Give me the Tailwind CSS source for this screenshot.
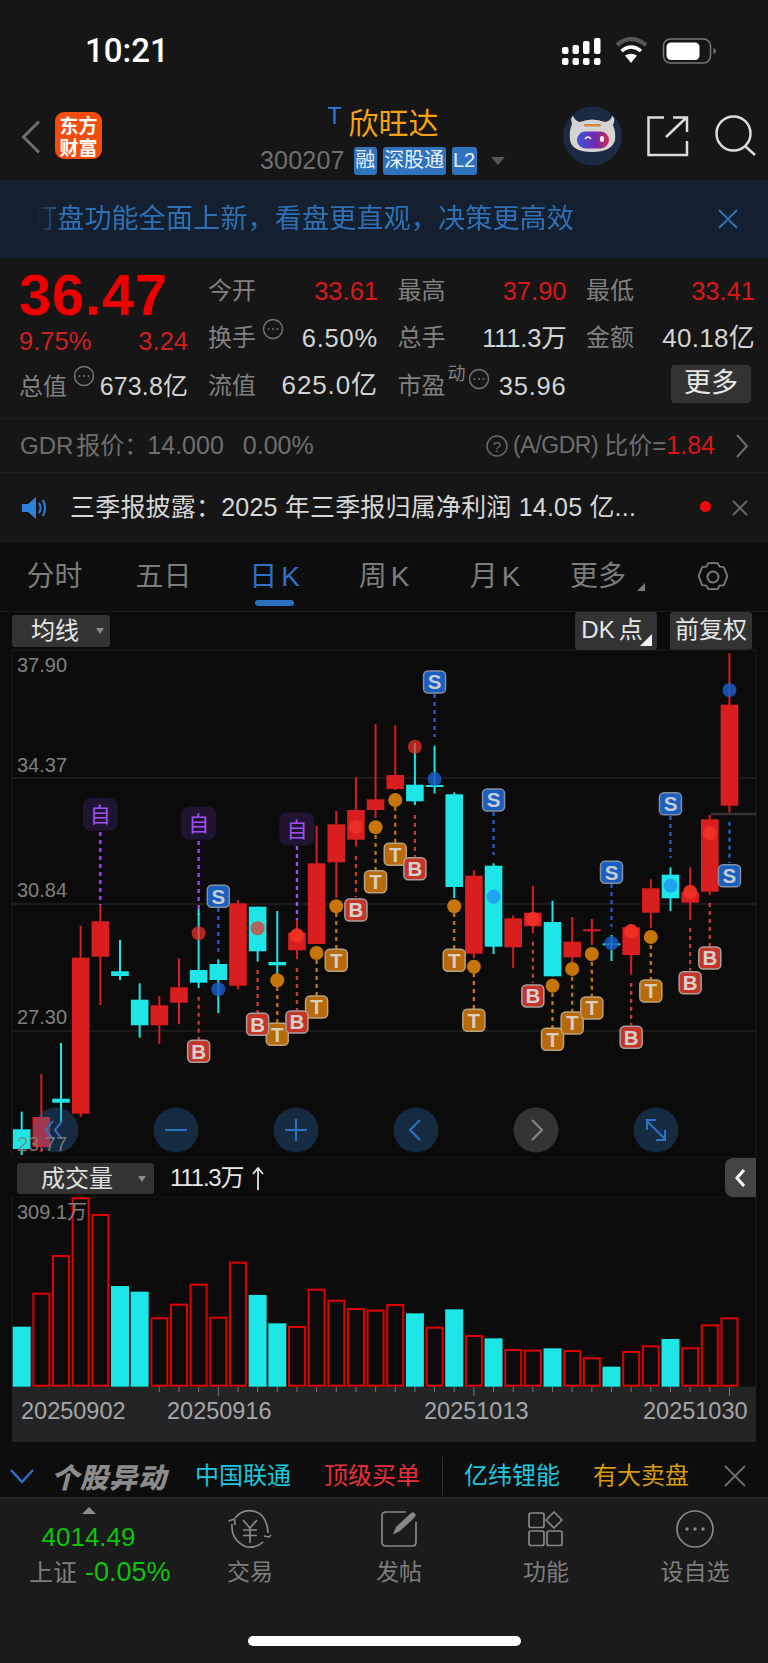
<!DOCTYPE html>
<html lang="zh">
<head>
<meta charset="UTF-8">
<title>欣旺达 日K</title>
<script src="https://cdn.jsdelivr.net/npm/@tailwindcss/browser@4"></script>
</head>
<body class="bg-[#161616] font-['Liberation_Sans','Noto_Sans_CJK_SC',sans-serif]">
<div class="w-[768px] h-[1663px] flex flex-col overflow-hidden text-[#808080]">

  <!-- status bar -->
  <div class="h-[100px] flex items-start justify-between">
    <span class="ml-[85px] mt-[32px] text-[33px] leading-[38px] font-medium text-white font-['Roboto',sans-serif]">10:21</span>
    <svg class="mt-[32px]" width="230" height="40" viewBox="538 32 230 40">
      <g fill="#fff">
        <rect x="562" y="58" width="6.5" height="7" rx="2"/><rect x="572.5" y="58" width="6.5" height="7" rx="2"/><rect x="583" y="58" width="6.5" height="7" rx="2"/><rect x="594" y="58" width="6.5" height="7" rx="2"/>
        <rect x="562" y="47" width="6.5" height="7" rx="2"/><rect x="572.5" y="45" width="6.5" height="9" rx="2"/><rect x="583" y="41" width="6.5" height="13" rx="2"/><rect x="594" y="38" width="6.5" height="16" rx="2"/>
      </g>
      <path d="M617 45 Q631 33 646 45" fill="none" stroke="#555" stroke-width="4.5"/>
      <path d="M621.500 51 Q631 43 641 51" fill="none" stroke="#fff" stroke-width="3.500"/>
      <path d="M625 55.500 Q631 52 637 55.500 L631 63 Z" fill="#fff"/>
      <rect x="663.500" y="39" width="47" height="24" rx="7" fill="none" stroke="#777" stroke-width="1.500"/>
      <rect x="666.500" y="42.500" width="33" height="17.500" rx="4.500" fill="#fff"/>
      <path d="M713.500 47.500 Q716 50 716 51 Q716 52 713.500 54.500 Z" fill="#777"/>
    </svg>
  </div>

  <!-- title bar -->
  <div class="h-[80px] flex items-start relative">
    <svg class="ml-[21px] mt-[20px]" width="20" height="34" viewBox="0 0 20 34"><path d="M18 1.500 L2.500 17 L18 32.500" fill="none" stroke="#6e6e6e" stroke-width="3"/></svg>
    <div class="ml-[14px] mt-[12px] w-[47px] h-[47px] rounded-[9px] bg-[#f34c0c] flex items-center justify-center text-white text-[19px] leading-[22px] font-bold text-center font-['Noto_Sans_CJK_SC',sans-serif]">东方<br>财富</div>
    <div class="absolute left-[245px] top-[2px] w-[280px] h-[76px]">
      <div class="flex justify-center pr-[4px]">
        <span class="text-[#2f78dc] text-[23px] leading-[26px] mt-[1px] mr-[7px]">T</span>
        <span class="text-[#f5a20e] text-[30px] leading-[44px] mt-[0px]">欣旺达</span>
      </div>
      <div class="flex items-center mt-[1px] ml-[15px] h-[28px]">
        <span class="text-[25px] tracking-[0.2px] text-[#6f6f6f] mr-[9px]">300207</span>
        <span class="h-[28px] w-[23px] rounded-[3px] bg-[#2f72bd] text-[#e6eef8] text-[20px] leading-[27px] text-center">融</span>
        <span class="h-[28px] w-[63px] ml-[6px] rounded-[3px] bg-[#2f72bd] text-[#e6eef8] text-[20px] leading-[27px] text-center">深股通</span>
        <span class="h-[28px] w-[25px] ml-[6px] rounded-[3px] bg-[#2f72bd] text-[#e6eef8] text-[20px] leading-[27px] text-center">L2</span>
        <span class="ml-[14px] w-0 h-0 border-x-[7px] border-x-transparent border-t-[8px] border-t-[#565656]"></span>
      </div>
    </div>
    <svg class="ml-[461px] mt-[6px]" width="60" height="60" viewBox="563 106 60 60">
      <defs>
        <linearGradient id="visor" x1="0" x2="1" y1="0" y2="0"><stop offset="0" stop-color="#3f55d8"/><stop offset=".55" stop-color="#6a2bb0"/><stop offset="1" stop-color="#d0285a"/></linearGradient>
      </defs>
      <circle cx="592.700" cy="136" r="29.500" fill="#1d2a44"/>
      <path d="M572 124 Q570 117 573 116 Q575 121 580 122 Q592 117 605 122 Q611 121 612 116 Q616 118 613 125 Q616 132 615 140 Q612 152 592 152 Q572 152 570 140 Q569 131 572 124 Z" fill="#d6d4d2"/>
      <rect x="584" y="124" width="17" height="2.500" rx="1" fill="#c98a4a"/>
      <rect x="577" y="131.500" width="32" height="17" rx="8.500" fill="url(#visor)"/>
      <path d="M585 139 Q588 135 591 139" fill="none" stroke="#f5eefc" stroke-width="1.500"/>
      <rect x="600" y="136" width="4" height="6" rx="2" fill="#f6e9ee"/>
    </svg>
    <svg class="ml-[23px] mt-[14px]" width="44" height="44" viewBox="646 114 44 44">
      <path d="M664 117.500 H648.500 V155 H687 V141 M666 137 L686 118 M673 117.500 H687 V132" fill="none" stroke="#dcdcdc" stroke-width="2.500"/>
    </svg>
    <svg class="ml-[24px] mt-[13px]" width="44" height="44" viewBox="714 113 44 44">
      <circle cx="733.500" cy="133.500" r="17" fill="none" stroke="#dcdcdc" stroke-width="2.500"/>
      <path d="M745 146 L755 155" stroke="#dcdcdc" stroke-width="2.500"/>
    </svg>
  </div>

  <!-- promo banner -->
  <div class="h-[78px] bg-[#14202f] border-t border-[#222] flex items-center relative">
    <div class="ml-[30px] text-[27px] tracking-[0.2px] leading-[40px] text-[#2f70b5] mb-[2px] [mask-image:linear-gradient(to_right,transparent_6px,black_34px)]">盯盘功能全面上新，看盘更直观，决策更高效</div>
    <svg class="absolute left-[717px] top-[27px]" width="22" height="22" viewBox="0 0 22 22"><path d="M2 2 L20 20 M20 2 L2 20" stroke="#2f70b5" stroke-width="2"/></svg>
  </div>

  <!-- quote block -->
  <div class="h-[160px] pt-[9px] flex pl-[19px] pr-[13px]">
    <div class="w-[169px] shrink-0">
      <div class="h-[51px] text-[#ee0000] text-[58px] leading-[56px] font-bold tracking-[0.8px]">36.47</div>
      <div class="flex justify-between text-[#cf2020] text-[25.5px] leading-[46px] h-[44px]"><span>9.75%</span><span>3.24</span></div>
      <div class="flex items-center h-[48px] mt-[1px] relative">
        <span class="text-[24px]">总值</span>
        <svg class="absolute left-[54px] top-[2px]" width="22" height="22" viewBox="0 0 22 22"><use href="#more-dot"/></svg>
        <span class="ml-auto text-[25px] tracking-[0.1px] text-[#d4d4d4]">673.8亿</span>
      </div>
    </div>
    <div class="ml-[20px] grow grid grid-cols-[170px_169px_169px] gap-x-[19.5px] grid-rows-[47.5px_47.5px_47.5px] items-center text-[24px]">
      <div class="flex justify-between items-center"><span>今开</span><span class="text-[25.5px] text-[#d81818]">33.61</span></div>
      <div class="flex justify-between items-center"><span>最高</span><span class="text-[25.5px] text-[#d81818]">37.90</span></div>
      <div class="flex justify-between items-center"><span>最低</span><span class="text-[25.5px] text-[#d81818]">33.41</span></div>
      <div class="flex justify-between items-center relative"><span>换手</span>
        <svg class="absolute left-[54px] top-[-1px]" width="22" height="22" viewBox="0 0 22 22"><use href="#more-dot"/></svg>
        <span class="text-[25.5px] tracking-[0.8px] text-[#d4d4d4]">6.50%</span></div>
      <div class="flex justify-between items-center"><span>总手</span><span class="text-[25.5px] text-[#d4d4d4] tracking-[-0.2px]">111.3万</span></div>
      <div class="flex justify-between items-center"><span>金额</span><span class="text-[26px] text-[#d4d4d4] tracking-[0.3px]">40.18亿</span></div>
      <div class="flex justify-between items-center"><span>流值</span><span class="text-[26px] text-[#d4d4d4] tracking-[0.9px]">625.0亿</span></div>
      <div class="flex justify-between items-center relative"><span>市盈</span>
        <span class="absolute left-[50px] top-[-2px] text-[18px] leading-[18px]">动</span>
        <svg class="absolute left-[70px] top-[1px]" width="22" height="22" viewBox="0 0 22 22"><use href="#more-dot"/></svg>
        <span class="text-[25.5px] tracking-[0.8px] text-[#d4d4d4]">35.96</span></div>
      <div class="flex justify-end mb-[4px]"><span class="w-[80px] h-[38px] mr-[4px] rounded-[4px] bg-[#333333] text-[#e8e8e8] text-[27px] leading-[36px] text-center">更多</span></div>
    </div>
  </div>

  <!-- GDR row -->
  <div class="h-[55px] border-y border-[#1f1f1f] pl-[20px] pr-[19px] flex items-center text-[#6e6e6e]">
    <span class="text-[24px]">GDR<span class="ml-[3px]">报价：</span></span>
    <span class="ml-[-1px] text-[25px]">14.000</span>
    <span class="ml-[19px] text-[25px]">0.00%</span>
    <svg class="ml-auto mr-[5px]" width="22" height="24" viewBox="0 0 22 24"><circle cx="11" cy="12" r="10" fill="none" stroke="#6a6a6a" stroke-width="1.500"/><text x="11" y="17.500" text-anchor="middle" font-size="15" fill="#6a6a6a">?</text></svg>
    <span class="text-[23px] tracking-[-0.4px]">(A/GDR)</span>
    <span class="ml-[6px] text-[24px]">比价=</span>
    <span class="text-[25px] text-[#d81818]">1.84</span>
    <svg class="ml-[20px]" width="14" height="26" viewBox="0 0 14 26"><path d="M2 2 L12 13 L2 24" fill="none" stroke="#6e6e6e" stroke-width="2"/></svg>
  </div>

  <!-- announcement row -->
  <div class="h-[70px] pl-[22px] flex items-center relative">
    <svg width="26" height="22" viewBox="0 0 26 22"><path d="M0 7 H6 L14 0 V22 L6 15 H0 Z" fill="#2f7fd8"/><path d="M17 6 Q20 11 17 16 M21 3 Q25 11 21 19" fill="none" stroke="#2f7fd8" stroke-width="2"/></svg>
    <span class="ml-[22px] text-[25px] tracking-[0.2px] text-[#d8d8d8]">三季报披露：2025 年三季报归属净利润 14.05 亿...</span>
    <span class="absolute left-[700px] top-[28px] w-[11px] h-[11px] rounded-full bg-[#ee0a0a]"></span>
    <svg class="absolute left-[732px] top-[27px]" width="16" height="16" viewBox="0 0 16 16"><path d="M1 1 L15 15 M15 1 L1 15" stroke="#6a6a6a" stroke-width="1.800"/></svg>
  </div>

  <!-- period tabs -->
  <div class="h-[69px] bg-[#0d0d0d] border-b border-[#1a1a1a] flex items-start text-[28px] text-[#7c7c7c] relative">
    <div class="w-[109px] text-center pt-[13px] leading-[42px]">分时</div>
    <div class="w-[109px] text-center pt-[13px] leading-[42px]">五日</div>
    <div class="w-[113px] text-center pt-[13px] leading-[42px] text-[#2f70c8]">日<span class="ml-[4px]">K</span></div>
    <div class="w-[106px] text-center pt-[13px] leading-[42px]">周<span class="ml-[4px]">K</span></div>
    <div class="w-[116px] text-center pt-[13px] leading-[42px]">月<span class="ml-[4px]">K</span></div>
    <div class="w-[100px] text-center pt-[13px] leading-[42px] pr-[10px]">更多</div>
    <span class="absolute left-[637px] top-[40px] w-0 h-0 border-l-[8px] border-l-transparent border-b-[8px] border-b-[#7c7c7c]"></span>
    <svg class="absolute left-[696px] top-[17px]" width="34" height="34" viewBox="0 0 34 34"><path d="M12 2.500 H22 L24.500 6.500 L29 7 L33 17 L29 27 L24.500 27.500 L22 31.500 H12 L9.500 27.500 L5 27 L1 17 L5 7 L9.500 6.500 Z" fill="none" stroke="#7c7c7c" stroke-width="2" stroke-linejoin="round" transform="translate(1.700 .850) scale(.9)"/><circle cx="17" cy="17" r="5.500" fill="none" stroke="#7c7c7c" stroke-width="2"/></svg>
    <span class="absolute left-[255px] top-[57px] w-[39px] h-[6px] rounded-full bg-[#2c6fc0]"></span>
  </div>

  <!-- chart toolbar -->
  <div class="h-[38px] bg-[#0b0b0b] pl-[12px] pr-[16px] flex items-start text-[24px] text-[#e6e6e6]">
    <div class="w-[98px] h-[32px] mt-[3px] rounded-[3px] bg-[#333333] flex items-center pl-[19px] leading-[30px]">均线<span class="ml-[17px] w-0 h-0 border-x-[4px] border-x-transparent border-t-[6px] border-t-[#8a8a8a]"></span></div>
    <div class="ml-auto w-[82px] h-[38px] rounded-[3px] bg-[#333333] leading-[36px] text-center pr-[8px] relative">DK<span class="ml-[4px]">点</span><span class="absolute right-[5px] bottom-[4px] w-0 h-0 border-l-[12px] border-l-transparent border-b-[12px] border-b-[#f0f0f0]"></span></div>
    <div class="ml-[13px] w-[82px] h-[38px] rounded-[3px] bg-[#333333] leading-[36px] text-center">前复权</div>
  </div>

  <!-- k-line chart -->
  <div class="h-[508px] bg-[#0b0b0b] px-[12px]">
    <svg id="kline" class="block overflow-visible" width="744" height="508" viewBox="12 650 744 508"></svg>
  </div>

  <!-- volume header -->
  <div class="h-[39px] bg-[#0b0b0b] pl-[17px] flex items-start relative text-[24px]">
    <div class="w-[137px] h-[31px] mt-[5px] rounded-[3px] bg-[#333333] flex items-center pl-[24px] text-[#e0e0e0] leading-[30px]">成交量<span class="ml-[25px] w-0 h-0 border-x-[4px] border-x-transparent border-t-[6px] border-t-[#8a8a8a]"></span></div>
    <span class="ml-[16px] mt-[2px] leading-[36px] tracking-[-1.2px] text-[#e6e6e6]">111.3万</span>
    <svg class="ml-[9px] mt-[9px]" width="12" height="24" viewBox="0 0 12 24"><path d="M6 1 V23 M1 7 L6 1 L11 7" fill="none" stroke="#e6e6e6" stroke-width="1.800"/></svg>
    <div class="absolute left-[725px] top-0 w-[31px] h-[39px] rounded-l-[8px] bg-[#444444] flex items-center justify-center">
      <svg width="13" height="20" viewBox="0 0 13 20"><path d="M10 2 L3 10 L10 18" fill="none" stroke="#fff" stroke-width="3"/></svg>
    </div>
  </div>

  <!-- volume chart -->
  <div class="h-[190px] bg-[#0b0b0b] px-[12px]">
    <svg id="volume" class="block overflow-visible" width="744" height="190" viewBox="12 1197 744 190"></svg>
  </div>

  <!-- date axis -->
  <div class="h-[55px] bg-[#0b0b0b] px-[12px]">
    <div class="h-[55px] bg-[#232426] relative text-[23.5px] text-[#a6a6a6] leading-[26px]">
      <svg id="ticks" class="absolute left-0 top-0" width="744" height="12" viewBox="12 1387 744 12"></svg>
      <span class="absolute left-[9px] top-[11px]">20250902</span>
      <span class="absolute left-[155px] top-[11px]">20250916</span>
      <span class="absolute left-[412px] top-[11px]">20251013</span>
      <span class="absolute left-[631px] top-[11px]">20251030</span>
    </div>
  </div>

  <!-- movers ticker -->
  <div class="h-[57px] pt-[12px] bg-[#0d0d0d] border-b-2 border-[#262626] flex items-center relative text-[24px]">
    <svg class="ml-[10px]" width="24" height="16" viewBox="0 0 24 16"><path d="M1 2 L12 14 L23 2" fill="none" stroke="#2f72c4" stroke-width="2.500"/></svg>
    <span class="ml-[17px] text-[28px] font-black italic text-[#8c8c8c] font-['Noto_Sans_CJK_SC',sans-serif] leading-[34px] w-[124px] tracking-[1px]">个股异动</span>
    <span class="ml-[20px] text-[#1bc8de]">中国联通</span>
    <span class="ml-[33px] text-[#e8303a]">顶级买单</span>
    <span class="ml-[22px] w-px h-[38px] bg-[#333]"></span>
    <span class="ml-[21px] text-[#1bc8de]">亿纬锂能</span>
    <span class="ml-[33px] text-[#d79b0c]">有大卖盘</span>
    <svg class="ml-[35px]" width="22" height="22" viewBox="0 0 22 22"><path d="M1 1 L21 21 M21 1 L1 21" stroke="#6e6e6e" stroke-width="1.800"/></svg>
  </div>

  <!-- bottom bar -->
  <div class="grow bg-[#1b1b1b] relative text-[23px] text-[#7e7e7e]">
    <div class="absolute left-0 top-0 w-[177px]">
      <span class="block mx-auto mt-[8px] w-0 h-0 border-x-[7px] border-x-transparent border-b-[7px] border-b-[#8a8a8a]"></span>
      <div class="text-[26px] leading-[30px] text-[#0bc40b] mt-[8px] text-center">4014.49</div>
      <div class="mt-[4px] pl-[29px] leading-[32px] text-[24px] whitespace-nowrap">上证<span class="ml-[8px] text-[27px] text-[#0bc40b]">-0.05%</span></div>
    </div>
    <div class="absolute left-[180px] top-0 w-[140px] flex flex-col items-center">
      <svg class="mt-[9px]" width="46" height="42" viewBox="228 1509 46 42" fill="none" stroke="#888" stroke-width="1.700">
        <path d="M236 1519 Q244 1509 256 1512.500 Q268 1516 269 1534 M233 1525 Q232 1542 248 1548 Q258 1549 264 1543"/>
        <path d="M229.500 1522 L235.500 1520 L236 1526 M265 1537 L270 1538 L272 1536" stroke-linejoin="round"/>
        <path d="M244 1521 L251 1529 L258 1521 M244 1531 H258 M244 1536.500 H258 M251 1529 V1544"/>
      </svg>
      <span class="mt-[6px] leading-[32px]">交易</span>
    </div>
    <div class="absolute left-[329px] top-0 w-[140px] flex flex-col items-center">
      <svg class="mt-[9px]" width="42" height="42" viewBox="378 1509 42 42" fill="none" stroke="#888" stroke-width="1.700">
        <path d="M406 1513 H386 Q382 1513 382 1517 V1543 Q382 1547 386 1547 H412 Q416 1547 416 1543 V1523"/>
        <path d="M393 1535.500 L396 1528 L410 1515 L413 1513 L416 1516 L414 1519 L400 1532 Z" fill="#888" stroke="none"/>
      </svg>
      <span class="mt-[6px] leading-[32px]">发帖</span>
    </div>
    <div class="absolute left-[476px] top-0 w-[140px] flex flex-col items-center">
      <svg class="mt-[9px]" width="42" height="42" viewBox="526 1509 42 42" fill="none" stroke="#888" stroke-width="1.700">
        <rect x="530" y="1514" width="15" height="14.500" rx="2"/>
        <path d="M555 1513 L563 1521 L555 1529 L547 1521 Z" stroke-linejoin="round"/>
        <rect x="530" y="1532" width="15" height="14.500" rx="2"/>
        <rect x="548" y="1532" width="15" height="14.500" rx="2"/>
      </svg>
      <span class="mt-[6px] leading-[32px]">功能</span>
    </div>
    <div class="absolute left-[625px] top-0 w-[140px] flex flex-col items-center">
      <svg class="mt-[9px]" width="42" height="42" viewBox="673 1509 42 42">
        <circle cx="694" cy="1530" r="18" fill="none" stroke="#888" stroke-width="1.700"/>
        <circle cx="686" cy="1530" r="1.700" fill="#888"/><circle cx="694" cy="1530" r="1.700" fill="#888"/><circle cx="702" cy="1530" r="1.700" fill="#888"/>
      </svg>
      <span class="mt-[6px] leading-[32px]">设自选</span>
    </div>
    <span class="absolute left-[248px] top-[137px] w-[273px] h-[10px] rounded-full bg-white"></span>
  </div>
</div>

<svg width="0" height="0" class="absolute">
  <symbol id="more-dot" viewBox="0 0 22 22">
    <circle cx="11" cy="11" r="9.500" fill="none" stroke="#747474" stroke-width="1.500"/>
    <circle cx="6.500" cy="11" r="1" fill="#747474"/><circle cx="11" cy="11" r="1" fill="#747474"/><circle cx="15.500" cy="11" r="1" fill="#747474"/>
  </symbol>
</svg>

<script>
  const X = i => 21.7 + 19.66 * i
  const RED = '#d81e1e', CYAN = '#1ee6e6'

  // type, wick top, wick bottom, body top, body bottom
  const candles = [
    ['c',1111.7,1155,1129.3,1149],['r',1074,1152,1117,1147],['c',1043,1122,1098.7,1102.7],['r',925.7,1116.7,957.7,1113.7],
    ['r',905,1005,921.3,956.7],['c',940,980,971.3,976],['c',983.3,1037.7,999.7,1025.3],['r',996,1044,1005.3,1025.3],
    ['r',958.3,1024.3,987.3,1002.7],['c',909,988,970,982.7],['c',959.3,1013,964,980],['r',900,989.3,903.3,985.7],
    ['c',906.7,961.7,906.7,951.3],['c',911,975,962,965.3],['r',920,959.3,932.7,950.3],['r',826,944,863.3,944],
    ['r',811,898,824.3,862.3],['r',777.3,846.7,810,839.7],['r',724,818,799.3,810],['r',725.3,790,775,789],
    ['c',743,805,784.7,801.3],['c',745.7,793.3,785,786.3],['c',792.3,898,794.3,887],['r',870,958.3,875.7,953.7],
    ['c',863.3,954,865.7,946.7],['r',915.3,968,918.3,947.3],['r',885.7,933.3,912.7,926.3],['c',900.7,976.3,922,976.3],
    ['r',917,963,941.7,957.3],['r',919,945,929.3,930.7],['c',935,961,943.3,944.3],['r',924,974.7,927.3,955],
    ['r',879.3,928.3,888.3,912.7],['c',867.3,911,874.7,898.3],['r',867.3,920,892.3,902.7],['r',815,895,819.3,891.7],
    ['r',653.3,812.7,704.7,805.7]
  ]

  // candle, badge y, dash from, dash to, dot y
  const sMarks = [[10,896.3,908,951.7,989.3],[21,682,694,737,779],[24,800,812,855,896.7],[30,872.3,884,926.7,943.3],[33,803.7,816,858,885.7],[36,875.7,821.7,863,690]]
  const bMarks = [[9,1051.3,996.7,1040,933.3],[12,1024.3,970,1013,928.3],[14,1022,968,1010,935.3],[17,910,856,897,827],[20,868.7,815,856.7,746.7],[26,996,941.7,983,919],[31,1037.3,983,1025,931],[34,982.7,928,970.7,891.7],[35,958,903,946.7,833.3]]
  const tMarks = [[13,1034.3,987,1023,980.3],[15,1007,960,996,953],[16,960.3,913,949,906.3],[18,881.7,835,870,827.3],[19,854.3,806.7,842.7,800],[22,960.3,913,949,906.3],[23,1020.3,973,1009,966.7],[27,1039.3,993,1028,985.7],[28,1023,976.7,1011.7,969],[29,1008,961.7,996.7,954],[32,991,945,980,937]]
  const ziMarks = [[4,814.3,832,905],[9,823.3,841,915],[14,829,846,920]]

  const dash = (x, a, b, c) => `<path d="M${x} ${a} V${b}" stroke="${c}" stroke-width="2.300" stroke-dasharray="4 4"/>`
  const dot = (x, y, c, o) => `<circle cx="${x}" cy="${y}" r="7" fill="${c}" opacity="${o}"/>`
  const badge = (x, y, label, fill, edge, ink) =>
    `<rect x="${x - 11}" y="${y - 11}" width="22" height="22" rx="4.500" fill="${fill}" stroke="${edge}" stroke-width="1.500"/>` +
    `<text x="${x}" y="${y + 7.300}" text-anchor="middle" font-size="20.500" font-weight="700" font-family="Liberation Sans" fill="${ink}">${label}</text>`

  let k = ''
  k += '<rect x="12" y="650" width="744" height="508" fill="#0b0b0b" stroke="#1e1e1e"/>'
  for (const y of [778, 904, 1031]) k += `<path d="M12 ${y} H756" stroke="#222" stroke-width="1.500"/>`
  for (const [t, y] of [['37.90', 671.5], ['34.37', 771.500], ['30.84', 897], ['27.30', 1024]])
    k += `<text x="17" y="${y}" font-size="20" fill="#808080" font-family="Liberation Sans">${t}</text>`

  for (const [i, y, a, b] of ziMarks) k += dash(X(i), a, b, '#a050f0')
  candles.forEach((c, i) => {
    const col = c[0] === 'r' ? RED : CYAN
    k += `<path d="M${X(i)} ${c[1]} V${c[2]}" stroke="${col}" stroke-width="2"/>`
    k += `<rect x="${X(i) - 8.800}" y="${c[3]}" width="17.600" height="${Math.max(c[4] - c[3], 2)}" fill="${col}"/>`
  })
  for (const [i, y, a, b, d] of bMarks) k += dash(X(i), a, b, '#c83a30') + dot(X(i), d, '#f03025', i === 20 || i === 9 || i === 12 ? .72 : .95)
  for (const [i, y, a, b, d] of tMarks) k += dash(X(i), a, b, '#c67508') + dot(X(i), d, '#c67508', 1)
  for (const [i, y, a, b, d] of sMarks) k += dash(X(i), a, b, '#1c5fc8') + dot(X(i), d, i === 24 || i === 33 ? '#2099f0' : '#1a5cc4', .85)
  for (const [i, y] of ziMarks) {
    k += `<rect x="${X(i) - 17.500}" y="${y - 16.500}" width="35" height="33" rx="8" fill="#201530"/>`
    k += `<text x="${X(i)}" y="${y + 8}" text-anchor="middle" font-size="21" fill="#a050f0" font-family="Noto Sans CJK SC">自</text>`
  }
  for (const [i, y] of tMarks) k += badge(X(i), y, 'T', '#b86a08', '#b9a27e', '#d8cfc0')
  for (const [i, y] of bMarks) k += badge(X(i), y, 'B', '#c43528', '#a8a09e', '#d8d0ce')
  for (const [i, y] of sMarks) k += badge(X(i), y, 'S', '#1a5ec0', '#858e9e', '#c8ccd4')

  k += '<path d="M711 814 H756" stroke="#333" stroke-width="2.500"/>'

  // zoom and scroll buttons over the plot
  const blue = 'rgba(45,110,180,.33)', grey = 'rgba(255,255,255,.17)', ink = '#2f72c4'
  k += `<circle cx="56" cy="1130" r="22.500" fill="${blue}"/><path d="M53 1121 L46 1130 L53 1139 M62 1121 L55 1130 L62 1139" fill="none" stroke="${ink}" stroke-width="2"/>`
  k += `<circle cx="176" cy="1130" r="22.500" fill="${blue}"/><path d="M165 1130 H187" stroke="${ink}" stroke-width="2"/>`
  k += `<circle cx="296" cy="1130" r="22.500" fill="${blue}"/><path d="M285 1130 H307 M296 1119 V1141" stroke="${ink}" stroke-width="2"/>`
  k += `<circle cx="416" cy="1130" r="22.500" fill="${blue}"/><path d="M420 1120 L410 1130 L420 1140" fill="none" stroke="${ink}" stroke-width="2"/>`
  k += `<circle cx="536" cy="1130" r="22.500" fill="${grey}"/><path d="M532 1120 L542 1130 L532 1140" fill="none" stroke="#888" stroke-width="2"/>`
  k += `<circle cx="656" cy="1130" r="22.500" fill="${blue}"/><path d="M647 1121 L665 1139 M647 1130 V1120 H656 M665 1130 V1140 H656" fill="none" stroke="${ink}" stroke-width="2"/>`
  k += '<text x="17" y="1151" font-size="20" fill="#808080" opacity=".9" font-family="Liberation Sans">23.77</text>'
  document.getElementById('kline').innerHTML = k

  // volume bars, top y of each
  const vols = [500,401,288,115,165,378,395,475,434,374,473,308,405,490,501,389,422,447,452,435,460,503,448,528,535,570,572,565,573,595,620,576,559,537,565,496,475]
  const volCyan = [0,5,6,12,13,20,22,24,27,30,33]
  let v = '<rect x="12" y="1197" width="744" height="190" fill="#0b0b0b" stroke="#1e1e1e"/>'
  vols.forEach((z, i) => {
    const top = 1160 + z / 3
    if (volCyan.includes(i)) v += `<rect x="${X(i) - 9}" y="${top}" width="18" height="${1386.7 - top}" fill="${CYAN}"/>`
    else v += `<rect x="${X(i) - 8}" y="${top}" width="16" height="${1385.7 - top}" fill="none" stroke="#e00000" stroke-width="2"/>`
  })
  v += '<text x="17" y="1219" font-size="20" fill="#808080" font-family="Liberation Sans, Noto Sans CJK SC">309.1万</text>'
  document.getElementById('volume').innerHTML = v

  let t = ''
  vols.forEach((z, i) => {
    if (i < 7) return
    const major = i === 10 || i === 23 || i === 36
    t += `<path d="M${X(i)} 1387 V${major ? 1396 : 1392}" stroke="#777" stroke-width="1"/>`
  })
  document.getElementById('ticks').innerHTML = t
</script>
</body>
</html>
